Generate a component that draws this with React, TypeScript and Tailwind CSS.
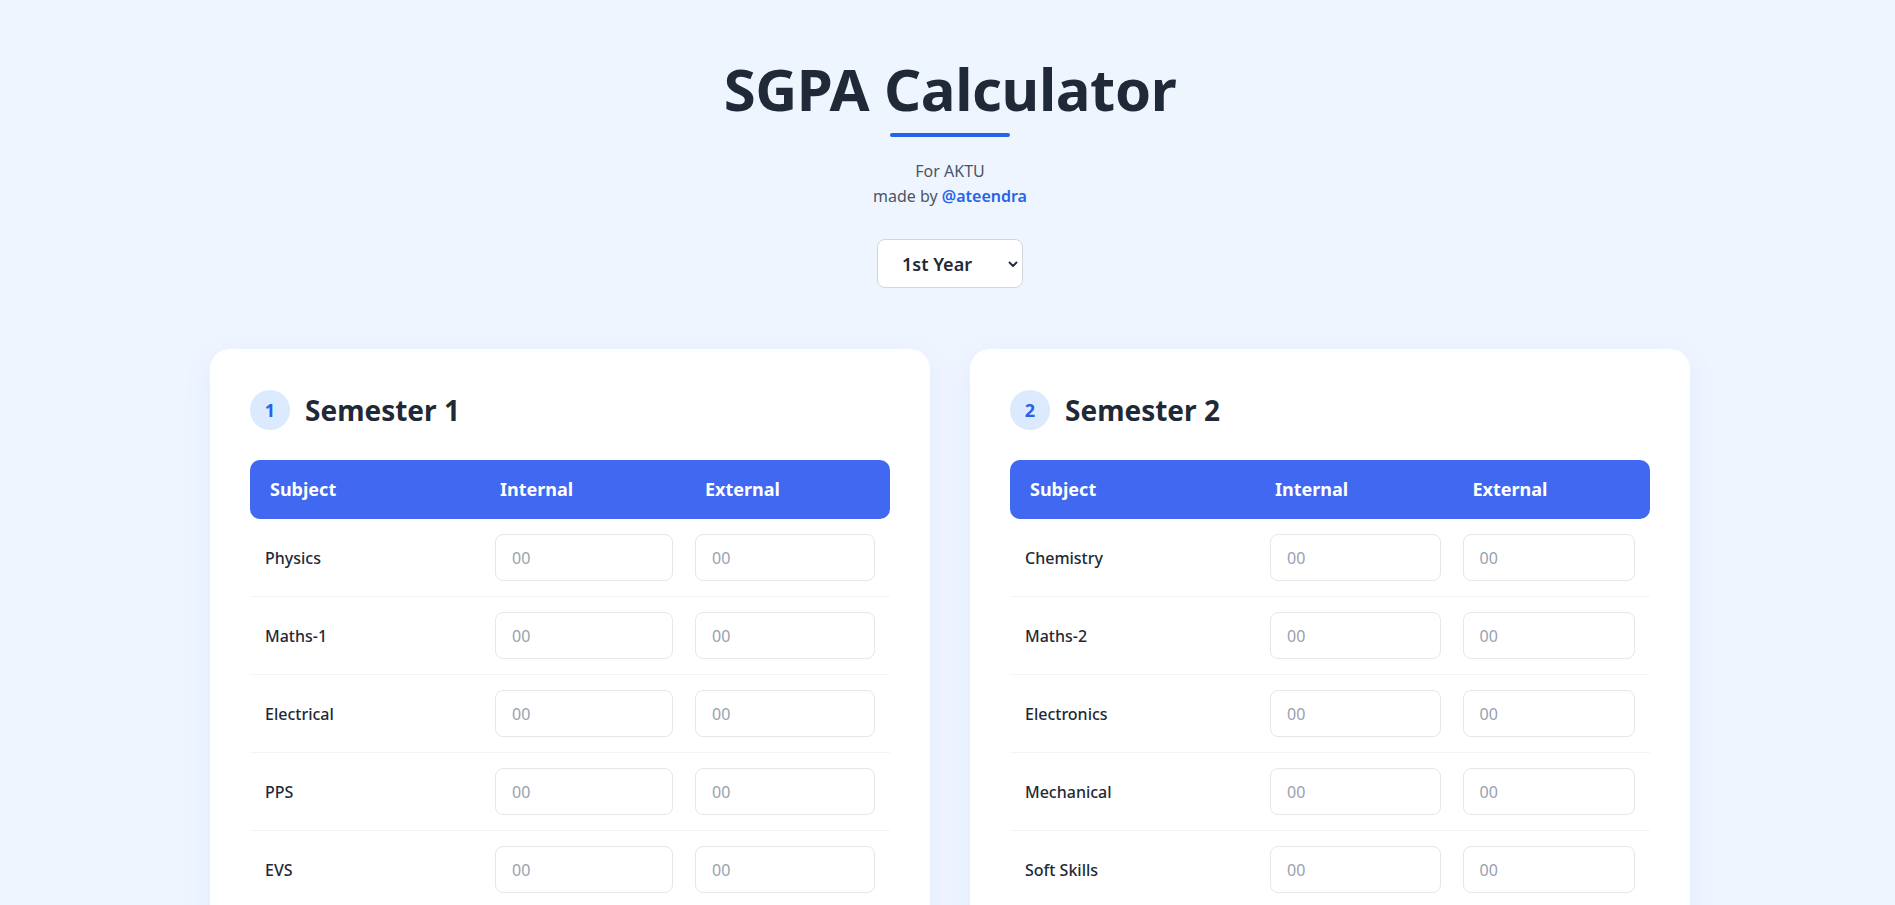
import type { ComponentProps } from "react";

interface Semester {
  no: number;
  subjects: string[];
  cols: string;
}

const semesters: Semester[] = [
  {
    no: 1,
    subjects: ["Physics", "Maths-1", "Electrical", "PPS", "EVS", "Physics Lab", "Electrical Lab"],
    cols: "grid-cols-[230px_1fr_1fr]",
  },
  {
    no: 2,
    subjects: ["Chemistry", "Maths-2", "Electronics", "Mechanical", "Soft Skills", "Chemistry Lab", "Workshop"],
    cols: "grid-cols-[245px_1fr_1fr]",
  },
];

export default function App() {
  return (
    <div className="min-h-screen bg-[#eff5ff] pl-[5px] pb-16 font-['Noto_Sans',sans-serif] text-gray-800">
      <header className="flex flex-col items-center pt-[53px]">
        <h1 className="text-[58px] leading-[72px] font-bold tracking-[-0.4px] text-[#1f2937]">SGPA Calculator</h1>
        <div className="mt-2 h-1 w-[120px] rounded-full bg-[#2563eb]"></div>
        <p className="mt-[22px] text-base leading-[25px] text-gray-600">For AKTU</p>
        <p className="text-base leading-[25px] text-gray-600">
          made by <a href="#" className="font-semibold text-[#2563eb]">@ateendra</a>
        </p>
        <div className="relative mt-[30px]">
          <select className="h-[49px] w-[146px] appearance-none rounded-lg border border-gray-300 bg-white pt-px pl-[24px] text-[18px] font-semibold text-[#1f2937]">
            <option>1st Year</option>
            <option>2nd Year</option>
            <option>3rd Year</option>
            <option>4th Year</option>
          </select>
          <svg
            className="pointer-events-none absolute right-[4px] top-[19px] h-[12px] w-[12px]"
            viewBox="0 0 12 12"
            fill="none"
            stroke="#1f2937"
            strokeWidth="1.8"
            strokeLinecap="round"
            strokeLinejoin="round"
          >
            <path d="M2.5 4.5 6 8l3.5-3.5" />
          </svg>
        </div>
      </header>

      <main className="mx-auto mt-[61px] grid w-[1480px] grid-cols-2 gap-10">
        {semesters.map((s) => (
          <SemesterCard key={s.no} {...s} />
        ))}
      </main>
    </div>
  );
}

function SemesterCard({ no, subjects, cols }: Semester) {
  return (
    <div className="rounded-[20px] bg-white px-10 pt-[41px] pb-8 shadow-[0_8px_30px_rgba(59,110,246,0.08)]">
      <div className="mb-[30px] flex items-center gap-[15px]">
        <span className="flex h-10 w-10 items-center justify-center rounded-full bg-[#dbeafe] text-[18px] font-bold text-[#2563eb]">
          {no}
        </span>
        <h2 className="text-[28px] leading-10 font-bold text-[#1f2937]">Semester {no}</h2>
      </div>

      <div className={`grid ${cols} h-[59px] items-center rounded-[10px] bg-[#4068f0] text-[18px] font-bold text-white`}>
        <div className="pl-5">Subject</div>
        <div className="pl-5">Internal</div>
        <div className="pl-5">External</div>
      </div>

      {subjects.map((sub) => (
        <div key={sub} className={`grid ${cols} items-center border-b border-gray-100 py-[15px] first-of-type:pt-4`}>
          <div className="pl-[15px] text-base font-medium text-[#1f2937]">{sub}</div>
          <div className="pl-[15px] pr-[12px]">
            <MarkInput />
          </div>
          <div className="pl-[10px] pr-[15px]">
            <MarkInput />
          </div>
        </div>
      ))}

      <button className="mt-8 h-12 w-full rounded-[10px] bg-[#4068f0] text-[18px] font-bold text-white">
        Calculate SGPA
      </button>
    </div>
  );
}

function MarkInput(props: ComponentProps<"input">) {
  return (
    <input
      {...props}
      type="number"
      placeholder="00"
      className="h-[47px] w-full rounded-lg border border-gray-200 bg-white px-4 text-base text-gray-800 outline-none placeholder:text-gray-400"
    />
  );
}
